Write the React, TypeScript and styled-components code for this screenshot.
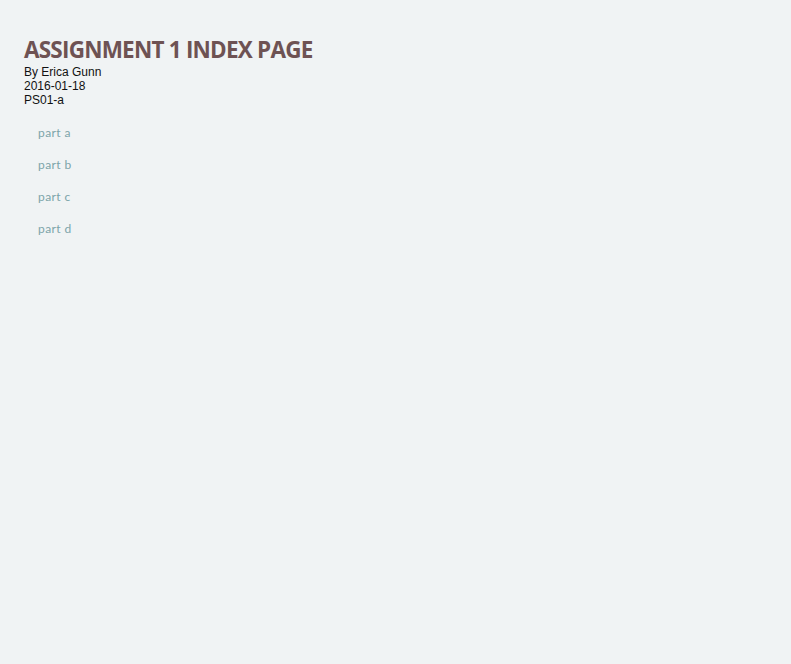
import React from "react";
import styled, { createGlobalStyle } from "styled-components";

const Global = createGlobalStyle`
  html, body { margin: 0; padding: 0; background: #f0f3f4; }
  body { min-height: 664px; }
`;

const Page = styled.div`
  padding: 35px 24px 0 24px;
  font-family: "Liberation Sans", Arial, sans-serif;
`;

const Title = styled.h1`
  margin: 0;
  font-family: "Open Sans", sans-serif;
  font-weight: 700;
  font-size: 22.5px;
  line-height: 30px;
  color: #6e5253;
  letter-spacing: -0.78px;
`;

const Meta = styled.div`
  font-size: 12px;
  line-height: 14px;
  color: #111;
`;

const Links = styled.ul`
  list-style: none;
  margin: 19px 0 0 0;
  padding: 0 0 0 14px;
  display: flex;
  flex-direction: column;
  gap: 18px;
`;

const LinkItem = styled.li`
  font-family: "Lato", sans-serif;
  font-weight: 400;
  font-size: 12px;
  line-height: 14px;
  letter-spacing: 0.4px;
  color: #7ca4a9;
`;

export default function App() {
  return (
    <>
      <Global />
      <Page>
        <Title>ASSIGNMENT 1 INDEX PAGE</Title>
        <Meta>By Erica Gunn</Meta>
        <Meta>2016-01-18</Meta>
        <Meta>PS01-a</Meta>
        <Links>
          {["part a", "part b", "part c", "part d"].map((t) => (
            <LinkItem key={t}>{t}</LinkItem>
          ))}
        </Links>
      </Page>
    </>
  );
}
